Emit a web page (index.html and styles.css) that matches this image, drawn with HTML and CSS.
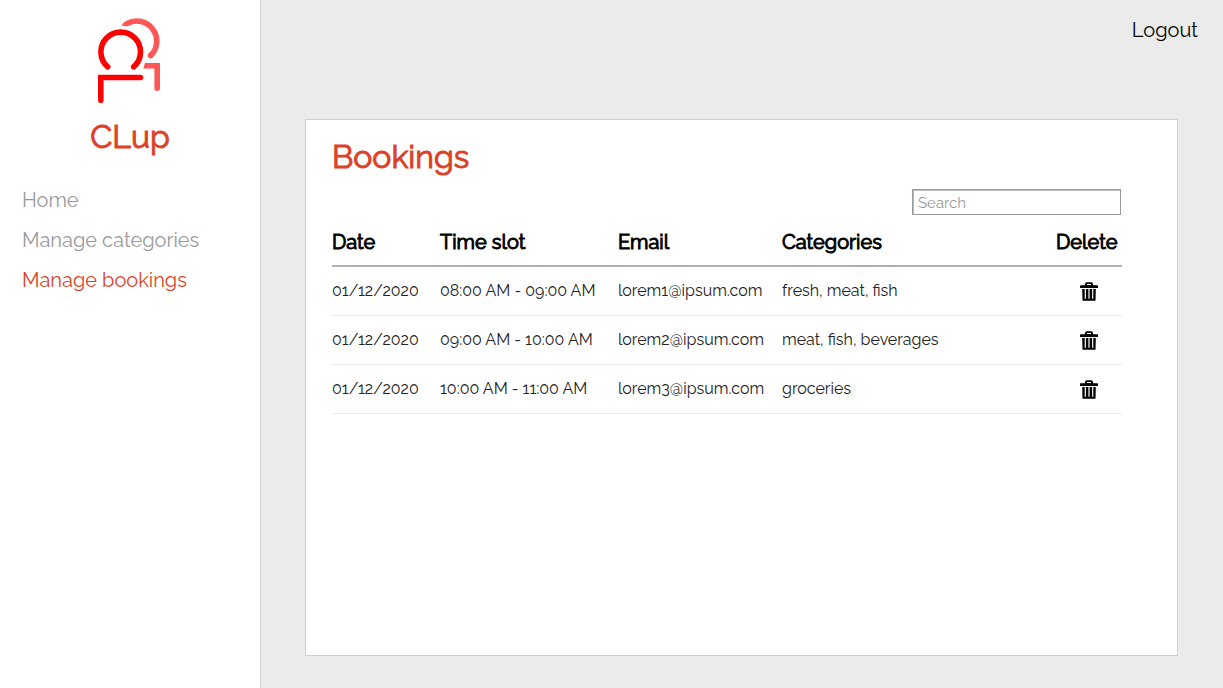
FILE: index.html
```html
<!DOCTYPE html>
<html lang="en">
<head>
<meta charset="utf-8">
<meta name="viewport" content="width=device-width, initial-scale=1">
<title>CLup - Bookings</title>
<link rel="stylesheet" href="styles.css">
</head>
<body>
<div class="app">
  <aside class="sidebar">
    <div class="brand">
      <svg class="brand-logo" viewBox="98 18 64 85" fill="none" stroke-width="5.6" aria-hidden="true">
        <g stroke="#ff5656">
          <path d="M127.2 23.5A20 20 0 0 1 150.5 55.6" />
          <circle cx="150.5" cy="55.6" r="2.8" fill="#ff5656" stroke="none" />
          <path d="M145 65.8H157.2V88.2" />
          <circle cx="157.2" cy="88.2" r="2.8" fill="#ff5656" stroke="none" />
        </g>
        <path d="M121.3 25.4Q123.5 22.6 126 21.1L127.5 21.5L128.8 25.8L127.5 26.4Z" fill="#ff5656" />
        <path d="M145.5 63H145L143.3 68.6H145.5Z" fill="#ff5656" />
        <g stroke="#ff0000" stroke-linecap="round">
          <path d="M107.7 66.9A19.8 19.8 0 1 1 133.7 66.9" />
          <path d="M140.5 77.5H100.8V100.2" stroke-linejoin="miter" />
        </g>
      </svg>
      <h1 class="brand-name">CLup</h1>
    </div>
    <nav class="menu">
      <a class="menu-link" href="#">Home</a>
      <a class="menu-link" href="#">Manage categories</a>
      <a class="menu-link menu-link-active" href="#" aria-current="page">Manage bookings</a>
    </nav>
  </aside>
  <div class="content">
    <header class="topbar"><a class="logout" href="#">Logout</a></header>
    <main class="panel">
      <h2 class="panel-title">Bookings</h2>
      <div class="toolbar"><input class="search" type="search" placeholder="Search" aria-label="Search"></div>
      <table class="bookings">
        <colgroup><col class="col-date"><col class="col-time"><col class="col-email"><col><col class="col-delete"></colgroup>
        <thead>
          <tr><th>Date</th><th>Time slot</th><th>Email</th><th>Categories</th><th>Delete</th></tr>
        </thead>
        <tbody>
          <tr><td>01/12/2020</td><td>08:00 AM - 09:00 AM</td><td>lorem1@ipsum.com</td><td>fresh, meat, fish</td>
            <td class="action"><button class="delete" type="button" aria-label="Delete lorem1@ipsum.com"><svg class="trash" viewBox="0 0 18 20" aria-hidden="true"><use href="#trash"/></svg></button></td></tr>
          <tr><td>01/12/2020</td><td>09:00 AM - 10:00 AM</td><td>lorem2@ipsum.com</td><td>meat, fish, beverages</td>
            <td class="action"><button class="delete" type="button" aria-label="Delete lorem2@ipsum.com"><svg class="trash" viewBox="0 0 18 20" aria-hidden="true"><use href="#trash"/></svg></button></td></tr>
          <tr><td>01/12/2020</td><td>10:00 AM - 11:00 AM</td><td>lorem3@ipsum.com</td><td>groceries</td>
            <td class="action"><button class="delete" type="button" aria-label="Delete lorem3@ipsum.com"><svg class="trash" viewBox="0 0 18 20" aria-hidden="true"><use href="#trash"/></svg></button></td></tr>
        </tbody>
      </table>
    </main>
  </div>
</div>
<svg width="0" height="0" class="sprite" aria-hidden="true">
  <symbol id="trash" viewBox="0 0 18 20">
    <path fill="#000" fill-rule="evenodd" d="M0 3.8Q0 3.2 .8 3.2H4.8L5.3 1.2Q5.5 .2 6.5 .2H11.5Q12.5 .2 12.7 1.2L13.2 3.2H17.2Q18 3.2 18 3.8V5.9H0ZM7 3H11V1.9H7Z"/>
    <path fill="#000" fill-rule="evenodd" d="M2.2 7H15.8L15.5 18.8H2.5ZM4.7 7V16.8H5.9V7ZM8.4 7V16.8H9.6V7ZM12.1 7V16.8H13.3V7Z"/>
  </symbol>
</svg>
</body>
</html>
```
FILE: styles.css
```css
* { box-sizing: border-box; }

body {
  margin: 0;
  background: #ebebeb;
  color: #000;
  font-family: Raleway, Lato, sans-serif;
}

.app { display: flex; min-height: 100vh; }

.sidebar {
  flex: 0 0 261px;
  background: #fff;
  border-right: 1px solid #d0d0d0;
}

.brand {
  display: flex;
  flex-direction: column;
  align-items: center;
  padding-top: 18px;
}

.brand-logo { display: block; width: 64px; height: 85px; }

.brand-name {
  margin: 14px 0 0;
  color: #dc4228;
  font-size: 32px;
  line-height: 40px;
  font-weight: 400;
  -webkit-text-stroke: 1px currentColor;
}

.menu {
  display: flex;
  flex-direction: column;
  gap: 16px;
  padding: 31px 22px;
}

.menu-link {
  color: #999;
  font-size: 20px;
  line-height: 24px;
  font-weight: 400;
  text-decoration: none;
}

.menu-link-active { color: #dc4228; }

.content {
  flex: 1;
  display: flex;
  flex-direction: column;
  min-width: 0;
  padding: 0 45px 32px 44px;
}

.topbar {
  display: flex;
  justify-content: flex-end;
  height: 119px;
  margin-right: -20px;
  padding-top: 18px;
}

.logout {
  color: #000;
  font-size: 20px;
  line-height: 24px;
  text-decoration: none;
}

.panel {
  flex: 1;
  padding: 17px 55px 24px 26px;
  background: #fff;
  border: 1px solid #d0d0d0;
}

.panel-title {
  margin: 0;
  color: #dc4228;
  font-size: 32px;
  line-height: 40px;
  font-weight: 400;
  -webkit-text-stroke: 1px currentColor;
}

.toolbar {
  display: flex;
  justify-content: flex-end;
  padding: 12px 1px 10px 0;
}

.search {
  width: 209px;
  height: 26px;
  padding: 1px 4px 0 5px;
  border: 1px solid #999;
  border-radius: 0;
  box-shadow: inset 1px 1px #bbb;
  background: #fff;
  font-family: inherit;
  font-size: 15px;
  font-weight: 400;
  appearance: none;
}

.search::placeholder { color: #999; opacity: 1; }

.bookings {
  width: 100%;
  table-layout: fixed;
  border-collapse: separate;
  border-spacing: 0;
}

.col-date { width: 108px; }
.col-time { width: 178px; }
.col-email { width: 164px; }
.col-delete { width: 66px; }

.bookings th,
.bookings td {
  padding: 0;
  text-align: left;
  white-space: nowrap;
}

.bookings th {
  height: 42px;
  padding-bottom: 6px;
  border-bottom: 2px solid #b0b0b0;
  font-size: 20px;
  line-height: 24px;
  font-weight: 400;
  -webkit-text-stroke: 1px currentColor;
}

.bookings td {
  height: 49px;
  border-bottom: 1px solid #ededed;
  color: #222;
  font-size: 16px;
  line-height: 20px;
}

.bookings .action { text-align: center; }

.delete {
  display: inline-flex;
  padding: 6px 0 0;
  border: 0;
  background: none;
  cursor: pointer;
}

.trash { display: block; width: 18px; height: 20px; }

.sprite { position: absolute; }
```
